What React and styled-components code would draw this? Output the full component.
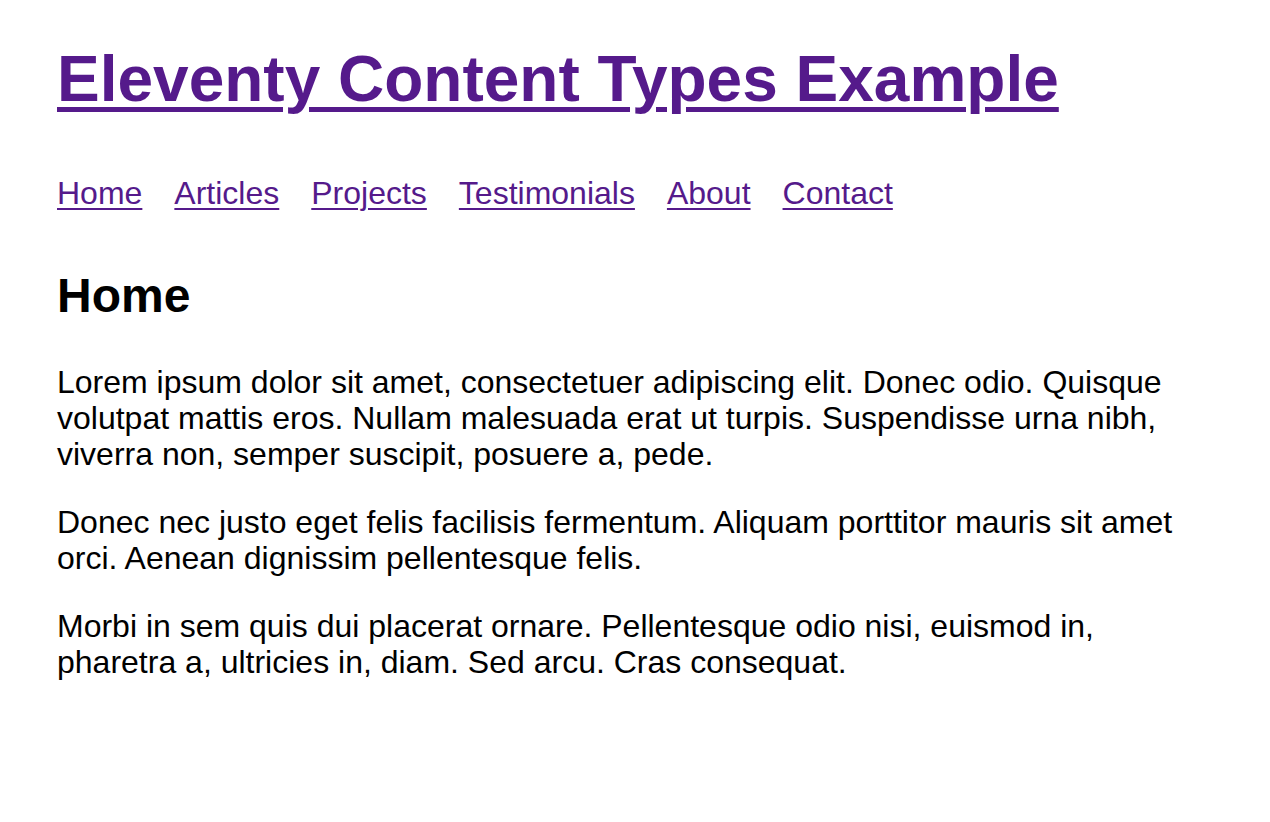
import React from "react";
import styled, { createGlobalStyle } from "styled-components";

const Global = createGlobalStyle`
  html, body { margin: 0; padding: 0; background: #fff; }
  body { font-family: "Liberation Sans", Arial, Helvetica, sans-serif; color: #000; }
`;

const Page = styled.div`
  padding: 43px 73px 40px 57px;
`;

const Title = styled.h1`
  margin: 0 0 58px;
  font-size: 64px;
  font-weight: 700;
  line-height: 1.15;
`;

const Link = styled.a`
  color: #551a8b;
  text-decoration: underline;
  text-decoration-thickness: ${(p) => (p.$thick ? "5px" : "2px")};
  text-underline-offset: ${(p) => (p.$thick ? "6px" : "4px")};
`;

const Nav = styled.nav`
  margin: 0 0 57px;
`;

const NavList = styled.ul`
  display: flex;
  gap: 32px;
  list-style: none;
  margin: 0;
  padding: 0;
  font-size: 32px;
  line-height: 1.15;
`;

const Heading = styled.h2`
  margin: 0 0 40px;
  font-size: 48px;
  font-weight: 700;
  line-height: 1.15;
`;

const Para = styled.p`
  margin: 0 0 32px;
  font-size: 32px;
  line-height: 36px;
`;

const links = ["Home", "Articles", "Projects", "Testimonials", "About", "Contact"];

export default function App() {
  return (
    <>
      <Global />
      <Page>
        <Title>
          <Link href="#" $thick>Eleventy Content Types Example</Link>
        </Title>
        <Nav>
          <NavList>
            {links.map((l) => (
              <li key={l}>
                <Link href="#">{l}</Link>
              </li>
            ))}
          </NavList>
        </Nav>
        <main>
          <Heading>Home</Heading>
          <Para>
            Lorem ipsum dolor sit amet, consectetuer adipiscing elit. Donec odio. Quisque volutpat mattis eros. Nullam malesuada erat ut turpis. Suspendisse urna nibh, viverra non, semper suscipit, posuere a, pede.
          </Para>
          <Para>
            Donec nec justo eget felis facilisis fermentum. Aliquam porttitor mauris sit amet orci. Aenean dignissim pellentesque felis.
          </Para>
          <Para>
            Morbi in sem quis dui placerat ornare. Pellentesque odio nisi, euismod in, pharetra a, ultricies in, diam. Sed arcu. Cras consequat.
          </Para>
        </main>
      </Page>
    </>
  );
}
